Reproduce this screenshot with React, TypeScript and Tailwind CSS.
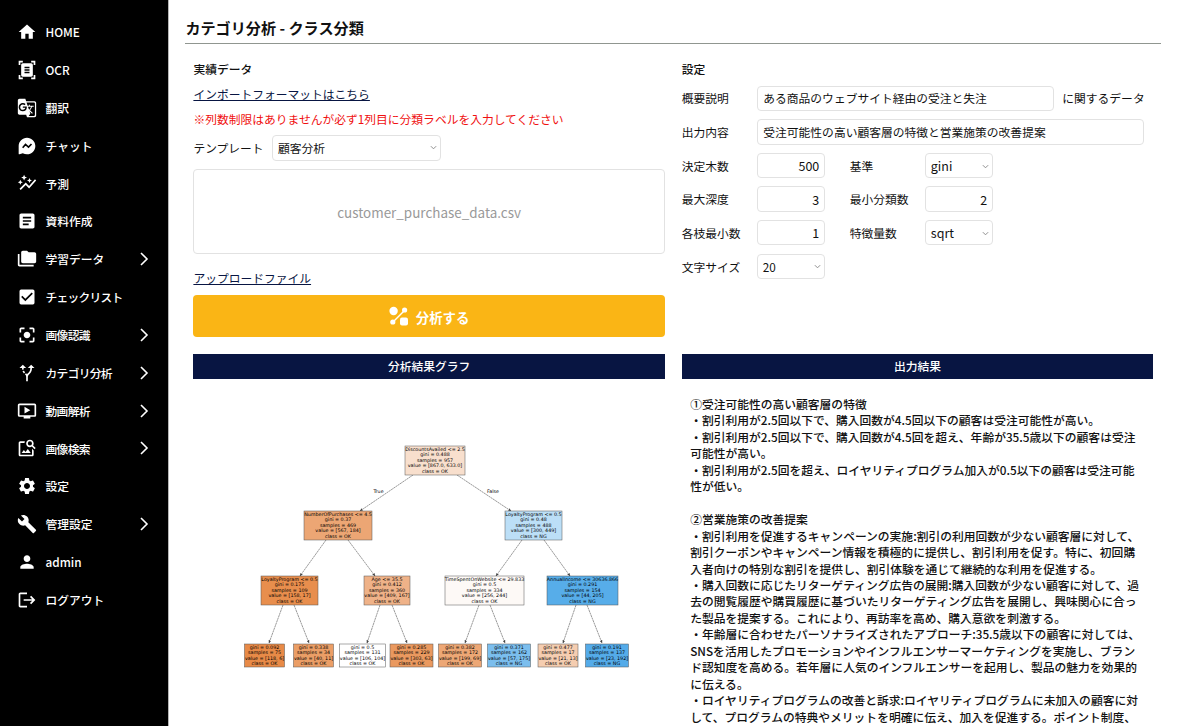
import type { ReactNode } from "react";
import {
    MdAltRoute,
    MdArticle,
    MdAutoGraph,
    MdBuild,
    MdCenterFocusStrong,
    MdCheckBox,
    MdDocumentScanner,
    MdFolderCopy,
    MdGTranslate,
    MdHome,
    MdImageSearch,
    MdLogout,
    MdOndemandVideo,
    MdPerson,
    MdSettings,
} from "react-icons/md";

function ChatIcon() {
    return (
        <svg viewBox="0 0 24 24" className="size-[1em]">
            <path
                d="M12 2C6.5 2 2 6.5 2 12v9.2c0 .5.5.9 1 .7l3.9-1.3c1.5.9 3.3 1.4 5.1 1.4 5.5 0 10-4.5 10-10S17.5 2 12 2Z"
                fill="currentColor"
            />
            <path d="m6.8 14.2 3.4-4 3.6 3.2 3.6-3.8" fill="none" stroke="#000" strokeWidth="1.9" />
        </svg>
    );
}

function AnalyzeIcon() {
    return (
        <svg viewBox="0 0 20 20" className="size-5" fill="currentColor">
            <circle cx="4.6" cy="5" r="4.2" />
            <circle cx="15.6" cy="4" r="2.6" />
            <circle cx="3.8" cy="16" r="2.6" />
            <rect x="11" y="11.5" width="8" height="8" rx="2" />
            <path d="M4 16 16 4" stroke="currentColor" strokeWidth="1.4" />
        </svg>
    );
}

const menu: { label: string; icon: ReactNode; more?: boolean; tracking?: string }[] = [
    { label: "HOME", icon: <MdHome /> },
    { label: "OCR", icon: <MdDocumentScanner /> },
    { label: "翻訳", icon: <MdGTranslate /> },
    { label: "チャット", icon: <ChatIcon /> },
    { label: "予測", icon: <MdAutoGraph /> },
    { label: "資料作成", icon: <MdArticle /> },
    { label: "学習データ", icon: <MdFolderCopy />, more: true },
    { label: "チェックリスト", icon: <MdCheckBox />, tracking: "tracking-[-0.75px]" },
    { label: "画像認識", icon: <MdCenterFocusStrong />, more: true, tracking: "tracking-[-0.7px]" },
    { label: "カテゴリ分析", icon: <MdAltRoute />, more: true, tracking: "tracking-[-0.7px]" },
    { label: "動画解析", icon: <MdOndemandVideo />, more: true, tracking: "tracking-[-0.7px]" },
    { label: "画像検索", icon: <MdImageSearch />, more: true, tracking: "tracking-[-0.7px]" },
    { label: "設定", icon: <MdSettings /> },
    { label: "管理設定", icon: <MdBuild />, more: true },
    { label: "admin", icon: <MdPerson /> },
    { label: "ログアウト", icon: <MdLogout /> },
];

function Sidebar() {
    return (
        <nav className="flex w-[169px] shrink-0 flex-col border-r border-[#b5b5b5] bg-black pt-[13px] font-medium text-white">
            {menu.map((item) => (
                <div key={item.label} className="flex h-[37.87px] shrink-0 items-center pr-[19px] pl-[17px]">
                    <span className="mr-[8.5px] text-[20px]">{item.icon}</span>
                    <span className={`flex-1 whitespace-nowrap ${item.tracking ?? ""}`}>{item.label}</span>
                    {item.more && (
                        <svg viewBox="0 0 10 14" className="h-[14px] w-[10px]" fill="none" stroke="currentColor" strokeWidth="1.6">
                            <path d="m2 1 6 6-6 6" />
                        </svg>
                    )}
                </div>
            ))}
        </nav>
    );
}

function Chevron() {
    return (
        <svg viewBox="0 0 8 8" className="size-[7px] shrink-0" fill="none" stroke="#8a8a8a" strokeWidth="1.1">
            <path d="m1 2.5 3 3 3-3" />
        </svg>
    );
}

function SelectBox({ value, className }: { value: string; className: string }) {
    return (
        <div className={`flex h-[25.4px] items-center justify-between rounded-[4px] border border-[#e2e2e2] pr-[3px] pl-[4.5px] ${className}`}>
            <span>{value}</span>
            <Chevron />
        </div>
    );
}

function TextBox({ value, className }: { value: string; className: string }) {
    return (
        <div className={`flex h-[25.4px] items-center rounded-[4px] border border-[#e2e2e2] px-[5px] whitespace-nowrap ${className}`}>
            {value}
        </div>
    );
}

function Label({ children }: { children: ReactNode }) {
    return <span className="w-[75.5px] shrink-0 whitespace-nowrap">{children}</span>;
}

function Row({ children }: { children: ReactNode }) {
    return <div className="flex h-[33.65px] items-center">{children}</div>;
}

function Settings() {
    return (
        <section className="w-[471.4px] pt-[14px]">
            <h2 className="h-[23.4px] leading-[22px] font-medium">設定</h2>
            <Row>
                <Label>概要説明</Label>
                <TextBox value="ある商品のウェブサイト経由の受注と失注" className="w-[297px]" />
                <span className="ml-[8px]">に関するデータ</span>
            </Row>
            <Row>
                <Label>出力内容</Label>
                <TextBox value="受注可能性の高い顧客層の特徴と営業施策の改善提案" className="w-[387px]" />
            </Row>
            <Row>
                <Label>決定木数</Label>
                <TextBox value="500" className="mr-[24.5px] w-[68px] justify-end pt-[2px] text-[12.5px]" />
                <Label>基準</Label>
                <SelectBox value="gini" className="w-[68px] pt-[2px] text-[12.5px]" />
            </Row>
            <Row>
                <Label>最大深度</Label>
                <TextBox value="3" className="mr-[24.5px] w-[68px] justify-end pt-[2px] text-[12.5px]" />
                <Label>最小分類数</Label>
                <TextBox value="2" className="w-[68px] justify-end pt-[2px] text-[12.5px]" />
            </Row>
            <Row>
                <Label>各枝最小数</Label>
                <TextBox value="1" className="mr-[24.5px] w-[68px] justify-end pt-[2px] text-[12.5px]" />
                <Label>特徴量数</Label>
                <SelectBox value="sqrt" className="w-[68px] pt-[2px] text-[12.5px]" />
            </Row>
            <Row>
                <Label>文字サイズ</Label>
                <SelectBox value="20" className="w-[68px]" />
            </Row>
        </section>
    );
}

function DataForm() {
    return (
        <section className="flex w-[471.4px] flex-col pt-[12px]">
            <h2 className="h-[25px] leading-[25px] font-medium">実績データ</h2>
            <a className="h-[25px] leading-[25px] text-[#081542] underline">インポートフォーマットはこちら</a>
            <p className="h-[25px] leading-[25px] text-[#f01010]">
                ※列数制限はありませんが必ず1列目に分類ラベルを入力してください
            </p>
            <div className="mt-[4.2px] flex items-center">
                <span className="w-[79px]">テンプレート</span>
                <SelectBox value="顧客分析" className="w-[168.5px]" />
            </div>
            <div className="mt-[8.4px] flex h-[85px] items-center justify-center rounded-[4px] border border-[#e2e2e2] pt-[2px] text-[13.44px] text-[#999]">
                customer_purchase_data.csv
            </div>
            <a className="mt-[11px] h-[25px] leading-[25px] text-[#081542] underline">アップロードファイル</a>
            <button className="mt-[5px] flex h-[42px] items-center justify-center gap-[7px] rounded-[4px] bg-[#fab515] text-[13.44px] font-bold text-white">
                <AnalyzeIcon />
                <span className="pt-[2px]">分析する</span>
            </button>
        </section>
    );
}

type TreeNode = { x: number; y: number; w: number; h: number; fill: string; lines: string[] };

// coordinates are relative to the chart's own origin
const nodes: TreeNode[] = [
    { x: 161, y: 5, w: 60, h: 29, fill: "#f8dfcd", lines: ["DiscountsAvailed <= 2.5", "gini = 0.488", "samples = 957", "value = [867.0, 633.0]", "class = OK"] },
    { x: 60, y: 70, w: 68, h: 29, fill: "#eca674", lines: ["NumberOfPurchases <= 4.5", "gini = 0.37", "samples = 469", "value = [567, 184]", "class = OK"] },
    { x: 261, y: 70, w: 57, h: 29, fill: "#bcdff7", lines: ["LoyaltyProgram <= 0.5", "gini = 0.48", "samples = 488", "value = [300, 449]", "class = NG"] },
    { x: 17, y: 135, w: 57, h: 29, fill: "#e88e4d", lines: ["LoyaltyProgram <= 0.5", "gini = 0.175", "samples = 109", "value = [158, 17]", "class = OK"] },
    { x: 120, y: 135, w: 46, h: 29, fill: "#efb288", lines: ["Age <= 35.5", "gini = 0.412", "samples = 360", "value = [409, 167]", "class = OK"] },
    { x: 201, y: 135, w: 79, h: 29, fill: "#fdf9f6", lines: ["TimeSpentOnWebsite <= 29.833", "gini = 0.5", "samples = 334", "value = [256, 244]", "class = OK"] },
    { x: 303, y: 135, w: 71, h: 29, fill: "#57ade9", lines: ["AnnualIncome <= 30636.866", "gini = 0.291", "samples = 154", "value = [44, 205]", "class = NG"] },
    { x: 0.5, y: 203, w: 40, h: 23, fill: "#e88a47", lines: ["gini = 0.092", "samples = 75", "value = [118, 6]", "class = OK"] },
    { x: 49.5, y: 203, w: 40, h: 23, fill: "#eb9e66", lines: ["gini = 0.338", "samples = 34", "value = [40, 11]", "class = OK"] },
    { x: 95.5, y: 203, w: 46, h: 23, fill: "#ffffff", lines: ["gini = 0.5", "samples = 131", "value = [106, 104]", "class = OK"] },
    { x: 146, y: 203, w: 43, h: 23, fill: "#ea995f", lines: ["gini = 0.285", "samples = 229", "value = [303, 63]", "class = OK"] },
    { x: 194.5, y: 203, w: 43, h: 23, fill: "#eda775", lines: ["gini = 0.382", "samples = 172", "value = [199, 69]", "class = OK"] },
    { x: 243.5, y: 203, w: 43, h: 23, fill: "#7bbeee", lines: ["gini = 0.371", "samples = 162", "value = [57, 175]", "class = NG"] },
    { x: 294, y: 203, w: 40, h: 23, fill: "#f5cdb0", lines: ["gini = 0.477", "samples = 17", "value = [21, 13]", "class = OK"] },
    { x: 341.5, y: 203, w: 43, h: 23, fill: "#54abe9", lines: ["gini = 0.191", "samples = 137", "value = [23, 192]", "class = NG"] },
];

const edges = [
    [169, 34, 116, 70],
    [213, 34, 267, 70],
    [82, 99, 56, 135],
    [104, 99, 131, 135],
    [278, 99, 252, 135],
    [300, 99, 326, 135],
    [39, 164, 25, 202],
    [50, 164, 65, 202],
    [136, 164, 123, 202],
    [148, 164, 163, 202],
    [235, 164, 221, 202],
    [246, 164, 261, 202],
    [332, 164, 319, 202],
    [343, 164, 358, 202],
];

function DecisionTree() {
    return (
        <svg width="390" height="232" viewBox="0 0 390 232" className="mt-[62px] ml-[50.6px]" fontFamily="DejaVu Sans, sans-serif" fontSize="4.8">
            <defs>
                <marker id="arrow" markerUnits="userSpaceOnUse" markerWidth="3.2" markerHeight="3.2" viewBox="0 0 4 4" refX="3.5" refY="2" orient="auto">
                    <path d="M0 .3 4 2 0 3.7Z" fill="#444" />
                </marker>
            </defs>
            {edges.map(([x1, y1, x2, y2], i) => (
                <line key={i} x1={x1} y1={y1} x2={x2} y2={y2} stroke="#555" strokeWidth=".6" strokeDasharray="2.2 .5" markerEnd="url(#arrow)" />
            ))}
            {nodes.map((n, i) => (
                <g key={i}>
                    <rect x={n.x} y={n.y} width={n.w} height={n.h} fill={n.fill} stroke="#555" strokeWidth=".5" />
                    {n.lines.map((line, j) => (
                        <text key={j} x={n.x + n.w / 2} y={n.y + 5 + j * 5.4} textAnchor="middle" fill="#000">
                            {line}
                        </text>
                    ))}
                </g>
            ))}
            <text x="134.5" y="51.6" textAnchor="middle">True</text>
            <text x="249" y="51.6" textAnchor="middle">False</text>
        </svg>
    );
}

const report = [
    "①受注可能性の高い顧客層の特徴",
    "・割引利用が2.5回以下で、購入回数が4.5回以下の顧客は受注可能性が高い。",
    "・割引利用が2.5回以下で、購入回数が4.5回を超え、年齢が35.5歳以下の顧客は受注",
    "可能性が高い。",
    "・割引利用が2.5回を超え、ロイヤリティプログラム加入が0.5以下の顧客は受注可能",
    "性が低い。",
    "",
    "②営業施策の改善提案",
    "・割引利用を促進するキャンペーンの実施:割引の利用回数が少ない顧客層に対して、",
    "割引クーポンやキャンペーン情報を積極的に提供し、割引利用を促す。特に、初回購",
    "入者向けの特別な割引を提供し、割引体験を通じて継続的な利用を促進する。",
    "・購入回数に応じたリターゲティング広告の展開:購入回数が少ない顧客に対して、過",
    "去の閲覧履歴や購買履歴に基づいたリターゲティング広告を展開し、興味関心に合っ",
    "た製品を提案する。これにより、再訪率を高め、購入意欲を刺激する。",
    "・年齢層に合わせたパーソナライズされたアプローチ:35.5歳以下の顧客に対しては、",
    "SNSを活用したプロモーションやインフルエンサーマーケティングを実施し、ブラン",
    "ド認知度を高める。若年層に人気のインフルエンサーを起用し、製品の魅力を効果的",
    "に伝える。",
    "・ロイヤリティプログラムの改善と訴求:ロイヤリティプログラムに未加入の顧客に対",
    "して、プログラムの特典やメリットを明確に伝え、加入を促進する。ポイント制度、",
];

function PanelTitle({ children }: { children: ReactNode }) {
    return (
        <h2 className="flex h-[25px] items-center justify-center bg-[#081542] pb-[1px] font-medium text-white">{children}</h2>
    );
}

export default function App() {
    return (
        <div className="flex h-[726px] w-[1200px] overflow-hidden bg-white font-['Noto_Sans_CJK_JP',sans-serif] text-[11.77px] leading-normal text-[#111]">
            <Sidebar />
            <main className="min-w-0 flex-1 pl-[16.4px]">
                <h1 className="flex h-[44px] w-[976px] items-end border-b border-[#909690] pb-[4px] text-[15.12px] leading-[24px] font-bold">
                    カテゴリ分析 - クラス分類
                </h1>
                <div className="flex h-[310px] gap-[17px] pl-[8px]">
                    <DataForm />
                    <Settings />
                </div>
                <div className="flex gap-[17px] pl-[8px]">
                    <section className="w-[471.4px]">
                        <PanelTitle>分析結果グラフ</PanelTitle>
                        <DecisionTree />
                    </section>
                    <section className="w-[471.4px]">
                        <PanelTitle>出力結果</PanelTitle>
                        <div className="pt-[17px] pl-[8.4px] leading-[16.46px] font-medium whitespace-nowrap">
                            {report.map((line, i) => (
                                <p key={i} className="h-[16.46px]">
                                    {line}
                                </p>
                            ))}
                        </div>
                    </section>
                </div>
            </main>
        </div>
    );
}
